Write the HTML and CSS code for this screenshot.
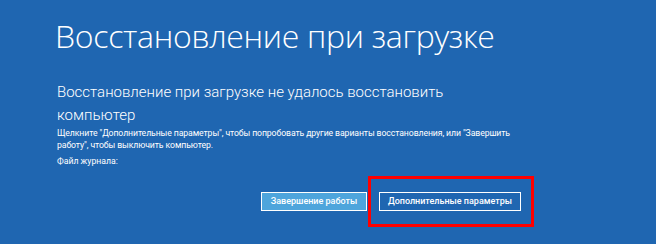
FILE: index.html
```html
<!DOCTYPE html>
<html lang="ru">

<head>
    <meta charset="UTF-8">
    <meta name="viewport" content="width=device-width, initial-scale=1.0">
    <title>Восстановление при загрузке</title>

    <link rel="stylesheet" href="styles.css">
</head>

<body>
    <div class="screen">
        <h1 class="title">Восстановление при загрузке</h1>

        <h2 class="subtitle">Восстановление при загрузке не удалось восстановить компьютер</h2>
        <p class="info">Щелкните "Дополнительные параметры", чтобы попробовать другие варианты восстановления, или "Завершить работу", чтобы выключить компьютер.</p>
        <p class="log">Файл журнала:</p>

        <div class="actions">
            <button class="btn btn-primary">Завершение работы</button>
            <div class="highlight">
                <button class="btn">Дополнительные параметры</button>
            </div>
        </div>
    </div>
</body>

</html>
```

FILE: styles.css
```css
body {
    margin: 0;
    background: #1f66b1;
    color: #fff;
    font-family: Roboto, "Noto Sans", "DejaVu Sans", sans-serif;
    overflow: hidden;
}

.screen {
    width: 656px;
    height: 244px;
    box-sizing: border-box;
    padding: 12px 0 0 57px;
}

.title {
    margin: 0 0 0 -2px;
    font-family: "Open Sans", "Noto Sans", sans-serif;
    font-size: 32px;
    font-weight: 300;
    line-height: 48px;
    letter-spacing: -0.3px;
}

.subtitle {
    width: 400px;
    margin: 21px 0 0 0;
    font-size: 15px;
    font-weight: 300;
    line-height: 23px;
}

.info {
    width: 466px;
    margin: 1px 0 0 0;
    font-size: 8.7px;
    line-height: 11.5px;
    letter-spacing: -0.1px;
}

.log {
    margin: 4px 0 0 0;
    font-size: 8.7px;
    line-height: 12px;
}

.actions {
    display: flex;
    align-items: center;
    margin: 9px 0 0 204px;
}

.btn {
    height: 19px;
    padding: 0;
    border: 1px solid #fff;
    background: #1f66b1;
    color: #fff;
    font-family: Roboto, "Noto Sans", sans-serif;
    font-size: 9px;
    font-weight: 500;
    line-height: 17px;
    white-space: nowrap;
}

.btn-primary {
    width: 106px;
    background: #4ea5dc;
}

.highlight {
    margin-left: 1px;
    padding: 10px 10px 13px 8px;
    border: 3px solid #f00;
}

.highlight .btn {
    width: 142px;
}
```
